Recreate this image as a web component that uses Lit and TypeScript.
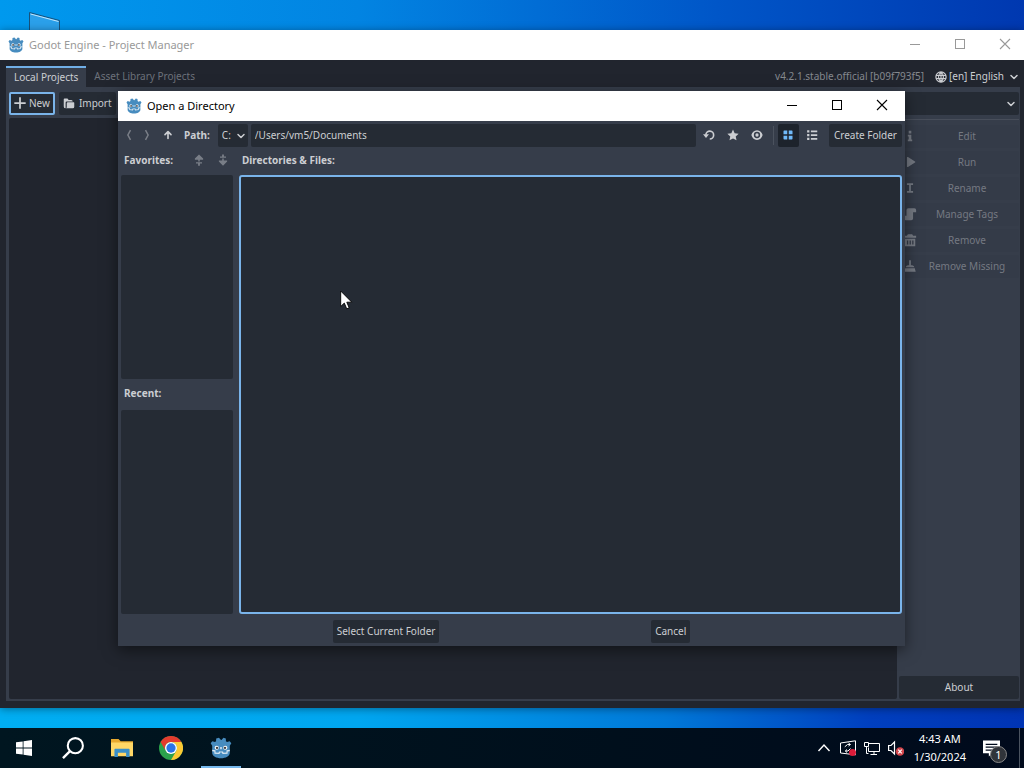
import { LitElement, html, css, svg, nothing, type TemplateResult } from "lit";
import { customElement, property } from "lit/decorators.js";

const glyphs: Record<string, TemplateResult> = {
  add: svg`<path d="M7 1.500h2V7h5.500v2H9v5.500H7V9H1.500V7H7z"/>`,
  load: svg`<path d="M2 2a1 1 0 0 0-1 1v9.500a2.500 2.500 0 0 0 2.500 2.500V7.500A1.500 1.500 0 0 1 5 6h8a2 2 0 0 0-2-2H7.500L6 2zm4.500 5A1.500 1.500 0 0 0 5 8.500V13a2 2 0 0 1-1 2h9a2 2 0 0 0 2-2V7.500L14.500 7z"/>`,
  back: svg`<path fill="none" stroke="currentColor" stroke-width="2" d="M10 1.500 6.500 8l3.500 6.500"/>`,
  forward: svg`<path fill="none" stroke="currentColor" stroke-width="2" d="M6 1.500 9.500 8 6 14.500"/>`,
  up: svg`<path fill="none" stroke="currentColor" stroke-width="2.200" stroke-linejoin="round" stroke-linecap="round" d="M8 12.500V4M4 7.500 8 3.500 12 7.500"/>`,
  moveUp: svg`<path d="M8 .5 2.500 6v1.500H7V10h2V7.500h4.500V6zM4 11h8v1.800H9.200V15.500H6.800v-2.700H4z"/>`,
  moveDown: svg`<path d="M6.800.5h2.400v2.700H12V5H4V3.200h2.800zM7 6h2v2.500h4.500V10L8 15.500 2.500 10V8.500H7z"/>`,
  chevron: svg`<path fill="none" stroke="currentColor" stroke-width="2" stroke-linejoin="round" stroke-linecap="round" d="m4 6 4 4 4-4"/>`,
  reload: svg`<path fill="none" stroke="currentColor" stroke-width="2.200" d="M9 13.300a5.200 5.200 0 1 0-5.200-5.600"/><path d="M0 7h8L4 12z"/>`,
  star: svg`<path d="m8 .8 2.200 4.900 5.300.6-3.900 3.600 1.100 5.200L8 12.500l-4.700 2.600 1.100-5.200L.5 6.300l5.300-.6z"/>`,
  eye: svg`<path fill-rule="evenodd" d="M8 1.500C4 1.500 1.300 4.500.5 8c.8 3.500 3.500 6.500 7.500 6.500s6.700-3 7.500-6.500C14.700 4.500 12 1.500 8 1.500zm0 2.300a4.200 4.200 0 1 1 0 8.400 4.200 4.200 0 0 1 0-8.400z"/><circle cx="8" cy="8" r="2.200"/>`,
  thumbs: svg`<path d="M3 2h4v5H2V3a1 1 0 0 1 1-1zm6 0h4a1 1 0 0 1 1 1v4H9zM2 9h5v5H3a1 1 0 0 1-1-1zm7 0h5v4a1 1 0 0 1-1 1H9z"/>`,
  list: svg`<path d="M1.500 1.500h3v3h-3zM6.500 2H15v2.200H6.500zM1.500 6.500h3v3h-3zM6.500 7H15v2.200H6.500zM1.500 11.500h3v3h-3zm5 .5H15v2.200H6.500z"/>`,
  edit: svg`<path d="M6.500 2h3v3h-3zM5.500 6.500h4V12h1v2h-5v-2h1V8.500h-1z"/>`,
  run: svg`<path d="M4.500 3v10a.8.8 0 0 0 1.200.7l8-5a.8.8 0 0 0 0-1.400l-8-5A.8.8 0 0 0 4.500 3z"/>`,
  rename: svg`<path d="M4.500 2.500h7v2H9v7h2.500v2h-7v-2H7v-7H4.500z"/>`,
  tags: svg`<path d="M6 1.500a2 2 0 0 0-2 2V10H1.500v2.500A2 2 0 0 0 3.500 15h6a2 2 0 0 0 2-2V6H15V3.500a2 2 0 0 0-2-2z"/>`,
  remove: svg`<path d="M5.500 1.500h5l1 1.500H15v2.500H1V3h3.500zM2 6.500h12V15H2zm2.500 2v4.500H6V8.500zm3 0v4.500H9V8.500zm3 0v4.500H12V8.500z" fill-rule="evenodd"/>`,
  clear: svg`<path d="M7 1.500h2V7h1.500a3 3 0 0 1 2.500 2.500H3A3 3 0 0 1 5.500 7H7zM2.500 10.500h11l1 4h-13z"/>`,
  globe: svg`<path fill="none" stroke="currentColor" stroke-width="1.600" d="M8 1.200a6.800 6.800 0 1 0 0 13.600 6.800 6.800 0 0 0 0-13.600zc-4.300 4.300-4.300 9.300 0 13.600 4.300-4.300 4.300-9.300 0-13.600zM1.500 6h13M1.500 10h13M8 1.500v13"/>`,
  minimize: svg`<path fill="none" stroke="currentColor" shape-rendering="crispEdges" d="M3 8.500h10"/>`,
  maximize: svg`<path fill="none" stroke="currentColor" shape-rendering="crispEdges" d="M3.500 3.500h9v9h-9z"/>`,
  close: svg`<path fill="none" stroke="currentColor" stroke-width="1.100" d="m3 3 10 10M13 3 3 13"/>`,
  godot: svg`<path fill="#478cbf" d="M6.500.5 8 2.200h.3L9.800.5l1.700.6.1 2 .8.600 1.900-.6 1.200 1.500-1.100 1.700V11.500c0 2.500-3 4-6.400 4s-6.400-1.500-6.400-4V6.300L.5 4.600l1.200-1.500 1.900.6.800-.6.100-2z"/><path fill="#fff" d="M1.600 9.300 4 9.600v1.700l2.200.2.300-1h3l.3 1 2.200-.2V9.600l2.400-.3v1l-1.600.3v1.500l-3.700.3-.4-1.100H7.300l-.4 1.100-3.700-.3v-1.500l-1.600-.3z" opacity=".8"/><circle cx="4.900" cy="7.800" r="1.500" fill="#fff"/><circle cx="11.100" cy="7.800" r="1.500" fill="#fff"/><circle cx="5.100" cy="7.900" r=".9" fill="#414042"/><circle cx="10.900" cy="7.900" r=".9" fill="#414042"/><path stroke="#fff" stroke-width=".9" d="M8 7.200v1.700"/>`,
  windows: svg`<path d="M0 2.300 6.700 1.400v6.200H0zm7.500-1L16 .1v7.500H7.500zM0 8.400h6.700v6.200L0 13.700zm7.500 0H16v7.500l-8.500-1.200z"/>`,
  search: svg`<circle cx="9.700" cy="6.300" r="5.500" fill="none" stroke="currentColor" stroke-width="1.500"/><path stroke="currentColor" stroke-width="1.700" d="M6 10.100.7 15.400"/>`,
  explorer: svg`<path fill="#e8a92e" d="M0 1.500h5.500L7 3h9v4H0z"/><path fill="#ffd766" d="M0 4h16v10H0z"/><path fill="#3a8fc8" d="M3 8.500h10a.5.5 0 0 1 .5.500v5.500H11V11.500H5v3H2.500V9a.5.500 0 0 1 .5-.5z"/>`,
  chrome: svg`<circle cx="8" cy="8" r="8" fill="#2ba24c"/><path fill="#e33b2e" d="M1.070 4A8 8 0 0 1 14.930 4H8a4 4 0 0 0-3.460 6z"/><path fill="#fcc934" d="M14.930 4A8 8 0 0 1 8 16l3.460-6A4 4 0 0 0 8 4z"/><circle cx="8" cy="8" r="4" fill="#fff"/><circle cx="8" cy="8" r="3.100" fill="#2a74e8"/>`,
  tray: svg`<path fill="none" stroke="currentColor" stroke-width="1.400" d="m2.500 11 5.500-6 5.500 6"/>`,
  update: svg`<path fill="none" stroke="currentColor" d="M.5 3 15.500.8v14L.5 13zM4.800 6.800 7.500 4.500H10M8.500 3l2 1.500-2 1.500M10.500 8.500 8 11H5.500M7 9.500 5.300 11 7 12.500"/><circle cx="12.500" cy="12.500" r="3.500" fill="#dd1c3a"/>`,
  network: svg`<path fill="none" stroke="currentColor" d="M5 3.500h10.500v8H4.500v-4M10 11.500v3M6.500 14.500H13M.5 2.500h4v4h-4zM2.500 6.500v7h2"/>`,
  volume: svg`<path fill="none" stroke="currentColor" stroke-width="1.200" d="M.6 5.500H3L6.500 2v12L3 10.500H.6z"/><circle cx="12" cy="11.500" r="4.300" fill="#d3464c"/><path stroke="#fff" stroke-width="1.200" d="m10.200 9.700 3.600 3.600m0-3.600-3.600 3.600"/>`,
  notes: svg`<path fill-rule="evenodd" d="M0 .5h16v12H8.500L5.500 15.500v-3H0zm2.500 3v1.200h11V3.500zm0 2.700v1.200h11V6.200zm0 2.700v1.200H10V8.900z"/>`,
};

@customElement("ui-icon")
export class UiIcon extends LitElement {
  @property() name = "";
  @property({ type: Number }) size = 12;

  static styles = css`
    :host { display: inline-flex; flex: none; }
    svg { display: block; fill: currentColor; }
  `;

  render() {
    return html`<svg width=${this.size} height=${this.size} viewBox="0 0 16 16" aria-hidden="true">${glyphs[this.name] ?? nothing}</svg>`;
  }
}

@customElement("title-bar")
export class TitleBar extends LitElement {
  @property() heading = "";

  static styles = css`
    :host { display: flex; align-items: center; height: 30px; flex: none; background: #fff; font: 11px/16px "Noto Sans", sans-serif; }
    .mark { margin: 0 5px 0 8px; }
    .name { flex: 1; font: inherit; margin: 0; white-space: nowrap; }
    button { width: 45px; height: 30px; padding: 0 0 2px; border: 0; background: none; color: inherit; display: grid; place-items: center; }
  `;

  render() {
    return html`
      <ui-icon class="mark" name="godot" size="16"></ui-icon>
      <h2 class="name">${this.heading}</h2>
      <button aria-label="Minimize"><ui-icon name="minimize" size="16"></ui-icon></button>
      <button aria-label="Maximize"><ui-icon name="maximize" size="16"></ui-icon></button>
      <button aria-label="Close"><ui-icon name="close" size="16"></ui-icon></button>
    `;
  }
}

const editorStyles = css`
  * { box-sizing: border-box; }
  button, select, input {
    font: inherit; color: inherit; height: 23px; margin: 0; padding: 0 4px 2px; border: 0; border-radius: 2px;
    background: #252b34; outline: none; white-space: nowrap;
  }
  button { display: flex; align-items: center; justify-content: center; gap: 4px; }
  select { appearance: none; }
  .pick { display: grid; align-items: center; }
  .pick > * { grid-area: 1 / 1; }
  .pick ui-icon { justify-self: end; margin-right: 2px; pointer-events: none; }
  .flat { background: none; }
`;

@customElement("directory-dialog")
export class DirectoryDialog extends LitElement {
  static styles = [editorStyles, css`
    :host { display: flex; flex-direction: column; background: #363d4a; color: #ccced2; font: 10px/14px "Noto Sans", sans-serif; box-shadow: 0 4px 14px rgba(0, 0, 0, 0.5); }
    title-bar { color: #000; padding-right: 1px; }
    .body { flex: 1; display: flex; flex-direction: column; gap: 3px; padding: 3px; min-height: 0; }
    .tools { display: flex; align-items: center; gap: 3px; }
    .tools .tool { width: 21px; padding: 0 0 1px; }
    .tools .step { width: 15px; padding: 0 0 1px; }
    .dim { opacity: 0.45; }
    .path { font-weight: 700; padding: 0 5px 2px 3px; }
    .drive select { width: 30px; }
    .drive ui-icon { margin-right: 1px; }
    .where { flex: 1; min-width: 0; }
    .rule { width: 1px; height: 19px; background: #4b525e; margin: 0 1px 0 2px; }
    .on { background: #1d232c; color: #70bafa; }
    .create { padding: 0 5px 2px; }
    .split { flex: 1; display: grid; grid-template-columns: 112px 1fr; gap: 6px; min-height: 0; }
    .side, .files { display: flex; flex-direction: column; min-height: 0; }
    .head { display: flex; align-items: center; gap: 3px; height: 22px; margin-bottom: 3px; padding: 0 0 2px 3px; }
    .head .tool { width: 21px; padding: 0; }
    h3 { flex: 1; font: inherit; font-weight: 700; margin: 0; }
    .lower { height: 28px; padding-top: 2px; }
    .tree { flex: 1; background: #252b34; border-radius: 2px; }
    .current { border: 2px solid #7ab4ea; border-radius: 3px; }
    .actions { display: flex; justify-content: space-evenly; padding-top: 3px; }
  `];

  render() {
    return html`
      <title-bar heading="Open a Directory"></title-bar>
      <div class="body">
        <div class="tools">
          <button class="flat step dim" aria-label="Go to previous folder"><ui-icon name="back"></ui-icon></button>
          <button class="flat step dim" aria-label="Go to next folder"><ui-icon name="forward"></ui-icon></button>
          <button class="flat tool" aria-label="Go to parent folder"><ui-icon name="up"></ui-icon></button>
          <label class="path" for="where">Path:</label>
          <div class="pick drive">
            <select aria-label="Drive"><option>C:</option></select>
            <ui-icon name="chevron"></ui-icon>
          </div>
          <input class="where" id="where" value="/Users/vm5/Documents" spellcheck="false">
          <button class="flat tool" aria-label="Refresh files"><ui-icon name="reload"></ui-icon></button>
          <button class="flat tool" aria-label="Favorite current folder"><ui-icon name="star"></ui-icon></button>
          <button class="flat tool" aria-label="Show hidden files"><ui-icon name="eye"></ui-icon></button>
          <span class="rule"></span>
          <button class="tool on" aria-label="View items as thumbnails"><ui-icon name="thumbs"></ui-icon></button>
          <button class="flat tool" aria-label="View items as a list"><ui-icon name="list"></ui-icon></button>
          <span></span>
          <button class="create">Create Folder</button>
        </div>
        <div class="split">
          <div class="side">
            <div class="head">
              <h3>Favorites:</h3>
              <button class="flat tool dim" aria-label="Move favorite up"><ui-icon name="moveUp"></ui-icon></button>
              <button class="flat tool dim" aria-label="Move favorite down"><ui-icon name="moveDown"></ui-icon></button>
            </div>
            <div class="tree"></div>
            <div class="head lower"><h3>Recent:</h3></div>
            <div class="tree"></div>
          </div>
          <div class="files">
            <div class="head"><h3>Directories &amp; Files:</h3></div>
            <div class="tree current"></div>
          </div>
        </div>
        <div class="actions">
          <button>Select Current Folder</button>
          <button>Cancel</button>
        </div>
      </div>
    `;
  }
}

@customElement("project-manager")
export class ProjectManager extends LitElement {
  static styles = [editorStyles, css`
    :host { display: flex; flex-direction: column; background: #21252e; color: #ccced2; font: 10px/14px "Noto Sans", sans-serif; box-shadow: 0 1px 8px rgba(0, 0, 0, 0.4); }
    title-bar { color: #999; margin-right: -3px; }
    .body { flex: 1; display: flex; flex-direction: column; padding: 6px 4px 7px 6px; min-height: 0; }
    .tabs { display: flex; align-items: center; height: 21px; }
    .tab { height: 21px; padding: 0 8px 2px; background: none; color: #6d727b; border-radius: 0; }
    .active { background: #363d4a; color: #ccced2; border-top: 2px solid #70aee6; }
    .version { margin-left: auto; padding-bottom: 2px; color: #85898f; text-decoration: none; }
    .language { display: flex; align-items: center; margin-left: 11px; }
    .language select { background: none; width: 73px; padding: 0 2px 1px; }
    .language .pick ui-icon { margin-right: 0; }
    .panel { flex: 1; display: flex; flex-direction: column; gap: 3px; padding: 5px 1px 2px 3px; background: #363d4a; min-height: 0; }
    .tools { display: flex; gap: 4px; }
    .tools .focus { border: 2px solid #7ab4ea; padding: 0 3px 1px 2px; gap: 2px; }
    .sort { flex: 1; }
    .sort select { width: 100%; }
    .main { flex: 1; display: flex; gap: 2px; min-height: 0; }
    .list { flex: 1; background: #21252e; border-radius: 2px; }
    .side { width: 120px; display: flex; flex-direction: column; gap: 3px; }
    .rule { height: 1px; margin: 1px 0 2px; background: #484e5a; }
    .side button.entry { gap: 2px; background: #343b48; color: #747982; }
    .entry span { flex: 1; text-align: center; }
    .about { margin-top: auto; }
  `];

  private entries = [
    ["edit", "Edit"],
    ["run", "Run"],
    ["rename", "Rename"],
    ["tags", "Manage Tags"],
    ["remove", "Remove"],
    ["clear", "Remove Missing"],
  ];

  render() {
    return html`
      <title-bar heading="Godot Engine - Project Manager"></title-bar>
      <div class="body">
        <div class="tabs" role="tablist">
          <button class="tab active" role="tab" aria-selected="true">Local Projects</button>
          <button class="tab" role="tab" aria-selected="false">Asset Library Projects</button>
          <a class="version" href="#version">v4.2.1.stable.official [b09f793f5]</a>
          <div class="language">
            <ui-icon name="globe"></ui-icon>
            <div class="pick">
              <select aria-label="Language"><option>[en] English</option></select>
              <ui-icon name="chevron"></ui-icon>
            </div>
          </div>
        </div>
        <div class="panel">
          <div class="tools">
            <button class="focus"><ui-icon name="add" size="14"></ui-icon>New</button>
            <button><ui-icon name="load"></ui-icon>Import</button>
            <div class="pick sort">
              <select aria-label="Sort projects"><option></option></select>
              <ui-icon name="chevron"></ui-icon>
            </div>
          </div>
          <div class="main">
            <div class="list"></div>
            <div class="side">
              <div class="rule"></div>
              ${this.entries.map(([icon, text]) => html`
                <button class="entry" disabled><ui-icon name=${icon} size="14"></ui-icon><span>${text}</span></button>
              `)}
              <button class="about">About</button>
            </div>
          </div>
        </div>
      </div>
    `;
  }
}

@customElement("task-bar")
export class TaskBar extends LitElement {
  static styles = css`
    * { box-sizing: border-box; }
    :host { display: flex; height: 40px; flex: none; background: linear-gradient(90deg, #001620, #000f1c 60%, #000a1c); color: #fff; font: 11px/18px "Noto Sans", sans-serif; }
    button { border: 0; padding: 0; background: none; color: inherit; font: inherit; display: grid; place-items: center; }
    .app { width: 49px; height: 40px; }
    .app:first-child { width: 48px; }
    .open { width: 40px; margin-left: 6px; border-bottom: 2px solid #76b9ed; padding-top: 2px; }
    .tray { margin-left: auto; display: flex; align-items: center; gap: 8px; }
    .clock { text-align: center; margin: 0 8px 0 2px; white-space: nowrap; }
    .notes { position: relative; width: 38px; height: 40px; border-right: 1px solid #4a5360; margin-right: 4px; padding-right: 18px; }
    .count { position: absolute; left: 8px; top: 18px; width: 17px; height: 17px; border-radius: 50%; border: 1px solid #888; background: #30343a; line-height: 15px; text-align: center; }
  `;

  render() {
    return html`
      <button class="app" aria-label="Start"><ui-icon name="windows" size="16"></ui-icon></button>
      <button class="app" aria-label="Search"><ui-icon name="search" size="22"></ui-icon></button>
      <button class="app" aria-label="File Explorer"><ui-icon name="explorer" size="22"></ui-icon></button>
      <button class="app" aria-label="Google Chrome"><ui-icon name="chrome" size="24"></ui-icon></button>
      <button class="app open" aria-label="Godot Engine"><ui-icon name="godot" size="22"></ui-icon></button>
      <div class="tray">
        <ui-icon name="tray" size="16"></ui-icon>
        <ui-icon name="update" size="16"></ui-icon>
        <ui-icon name="network" size="16"></ui-icon>
        <ui-icon name="volume" size="16"></ui-icon>
        <div class="clock"><div>4:43 AM</div><div>1/30/2024</div></div>
        <button class="notes" aria-label="Notifications"><ui-icon name="notes" size="17"></ui-icon><span class="count">1</span></button>
      </div>
    `;
  }
}

@customElement("app-root")
export class AppRoot extends LitElement {
  static styles = css`
    :host { display: flex; flex-direction: column; height: 100vh; overflow: hidden; }
    .desktop { position: relative; flex: 1; min-height: 0; overflow: hidden;
      background: linear-gradient(90deg, #0099ee, #0284e2 35%, #0056c8 70%, #0038b0); }
    .desktop::after { content: ""; position: absolute; left: 0; right: 0; bottom: 0; height: 40px;
      background: linear-gradient(90deg, #00aef2, #00a6f0 35%, #0078d8 65%, #003fbe 85%, #0034b4); }
    .shortcut { position: absolute; left: 28px; top: 11px; }
    .manager { position: absolute; z-index: 1; left: 0; right: 0; top: 30px; bottom: 20px; }
    .dialog { position: absolute; z-index: 2; left: 118px; right: 119px; top: 91px; bottom: 82px; }
    .pointer { position: absolute; z-index: 3; left: 340px; top: 290px; }
  `;

  render() {
    return html`
      <div class="desktop">
        <svg class="shortcut" width="34" height="26" viewBox="0 0 34 26" aria-hidden="true">
          <path d="M1.500 1.500 31.500 9.500V25H1.500z" fill="#2ba0ea" stroke="#17527c" stroke-width="1"/>
          <path d="M2.500 3 30.500 10.500" stroke="#c3e6fb" fill="none"/>
        </svg>
        <project-manager class="manager"></project-manager>
        <directory-dialog class="dialog"></directory-dialog>
        <svg class="pointer" width="13" height="20" viewBox="0 0 13 20" aria-hidden="true">
          <path d="M.7 1v15.500l3.600-3.400 2.400 5.700 2.500-1-2.400-5.600h5z" fill="#fff" stroke="#000" stroke-width=".9"/>
        </svg>
      </div>
      <task-bar></task-bar>
    `;
  }
}
